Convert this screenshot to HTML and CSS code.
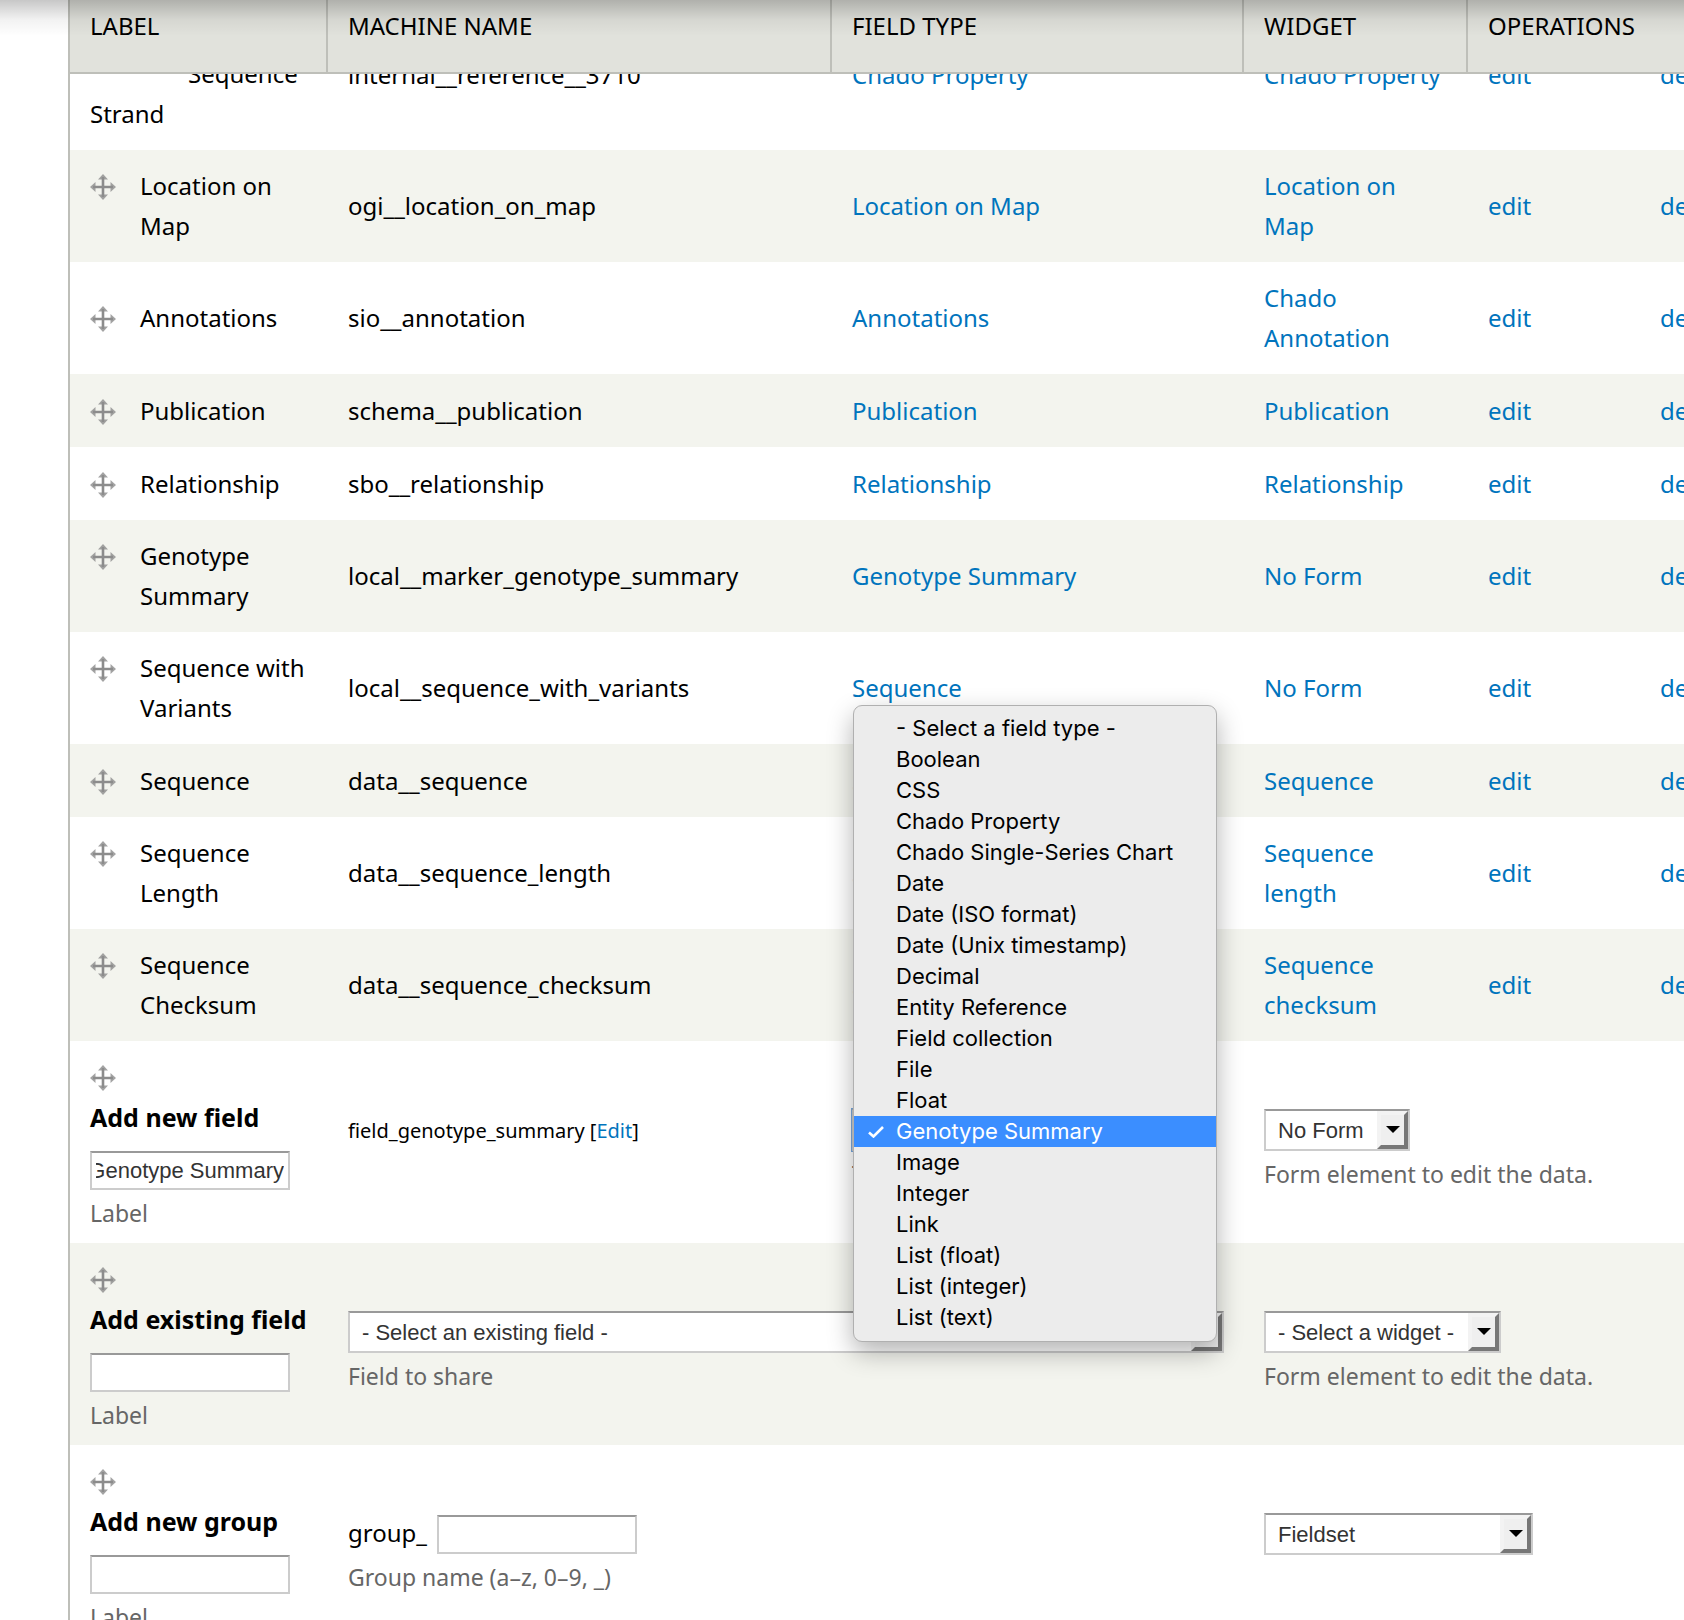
FILE: index.html
```html
<!DOCTYPE html>
<html lang="en">
<head>
<meta charset="utf-8">
<title>Manage fields</title>
<link rel="stylesheet" href="styles.css">
</head>
<body>
<svg class="sprite" aria-hidden="true">
  <symbol id="move" viewBox="0 0 26 26">
    <path d="M13 3v20M3 13h20" stroke="#8c8c8c" stroke-width="2.6" fill="none"/>
    <path d="M13 0l5 5.500H8zM13 26l5-5.500H8zM0 13l5.500-5v10zM26 13l-5.500-5v10z" fill="#8c8c8c" opacity=".8"/>
  </symbol>
</svg>
<div class="page">
  <table class="fields sticky-header">
    <colgroup><col class="c-label"><col class="c-name"><col class="c-type"><col class="c-widget"><col class="c-edit"><col class="c-delete"></colgroup>
    <thead>
      <tr><th scope="col">LABEL</th><th scope="col">MACHINE NAME</th><th scope="col">FIELD TYPE</th><th scope="col">WIDGET</th><th scope="col" colspan="2">OPERATIONS</th></tr>
    </thead>
  </table>
  <table class="fields">
    <colgroup><col class="c-label"><col class="c-name"><col class="c-type"><col class="c-widget"><col class="c-edit"><col class="c-delete"></colgroup>
    <tbody>
      <tr class="scrolled">
        <td class="nested">Sequence Strand</td>
        <td>internal__reference__3710</td>
        <td><a href="#">Chado Property</a></td>
        <td><a href="#">Chado Property</a></td>
        <td><a href="#">edit</a></td>
        <td><a href="#">delete</a></td>
      </tr>
      <tr class="odd">
        <td><div class="label"><svg class="handle"><use href="#move"/></svg><span>Location on Map</span></div></td>
        <td>ogi__location_on_map</td>
        <td><a href="#">Location on Map</a></td>
        <td><a href="#">Location on Map</a></td>
        <td><a href="#">edit</a></td>
        <td><a href="#">delete</a></td>
      </tr>
      <tr>
        <td><div class="label"><svg class="handle"><use href="#move"/></svg><span>Annotations</span></div></td>
        <td>sio__annotation</td>
        <td><a href="#">Annotations</a></td>
        <td><a href="#">Chado Annotation</a></td>
        <td><a href="#">edit</a></td>
        <td><a href="#">delete</a></td>
      </tr>
      <tr class="odd">
        <td><div class="label"><svg class="handle"><use href="#move"/></svg><span>Publication</span></div></td>
        <td>schema__publication</td>
        <td><a href="#">Publication</a></td>
        <td><a href="#">Publication</a></td>
        <td><a href="#">edit</a></td>
        <td><a href="#">delete</a></td>
      </tr>
      <tr>
        <td><div class="label"><svg class="handle"><use href="#move"/></svg><span>Relationship</span></div></td>
        <td>sbo__relationship</td>
        <td><a href="#">Relationship</a></td>
        <td><a href="#">Relationship</a></td>
        <td><a href="#">edit</a></td>
        <td><a href="#">delete</a></td>
      </tr>
      <tr class="odd">
        <td><div class="label"><svg class="handle"><use href="#move"/></svg><span>Genotype Summary</span></div></td>
        <td>local__marker_genotype_summary</td>
        <td><a href="#">Genotype Summary</a></td>
        <td><a href="#">No Form</a></td>
        <td><a href="#">edit</a></td>
        <td><a href="#">delete</a></td>
      </tr>
      <tr>
        <td><div class="label"><svg class="handle"><use href="#move"/></svg><span>Sequence with Variants</span></div></td>
        <td>local__sequence_with_variants</td>
        <td><a href="#">Sequence</a></td>
        <td><a href="#">No Form</a></td>
        <td><a href="#">edit</a></td>
        <td><a href="#">delete</a></td>
      </tr>
      <tr class="odd">
        <td><div class="label"><svg class="handle"><use href="#move"/></svg><span>Sequence</span></div></td>
        <td>data__sequence</td>
        <td><a href="#">Sequence</a></td>
        <td><a href="#">Sequence</a></td>
        <td><a href="#">edit</a></td>
        <td><a href="#">delete</a></td>
      </tr>
      <tr>
        <td><div class="label"><svg class="handle"><use href="#move"/></svg><span>Sequence Length</span></div></td>
        <td>data__sequence_length</td>
        <td><a href="#">Sequence length</a></td>
        <td><a href="#">Sequence length</a></td>
        <td><a href="#">edit</a></td>
        <td><a href="#">delete</a></td>
      </tr>
      <tr class="odd">
        <td><div class="label"><svg class="handle"><use href="#move"/></svg><span>Sequence Checksum</span></div></td>
        <td>data__sequence_checksum</td>
        <td><a href="#">Sequence checksum</a></td>
        <td><a href="#">Sequence checksum</a></td>
        <td><a href="#">edit</a></td>
        <td><a href="#">delete</a></td>
      </tr>
      <tr class="add">
        <td>
          <svg class="handle"><use href="#move"/></svg>
          <strong>Add new field</strong>
          <input class="text overflowing" type="text" id="new-label" value="Genotype Summary">
          <label class="description" for="new-label">Label</label>
        </td>
        <td class="form"><div class="machine-name">field_genotype_summary [<a href="#">Edit</a>]</div></td>
        <td class="form">
          <div class="type-picker">
            <span class="select focused"><select id="new-type"><option>Genotype Summary</option></select></span>
            <ul class="menu" role="listbox" aria-label="Field type">
              <li role="option">- Select a field type -</li>
              <li role="option">Boolean</li>
              <li role="option">CSS</li>
              <li role="option">Chado Property</li>
              <li role="option">Chado Single-Series Chart</li>
              <li role="option">Date</li>
              <li role="option">Date (ISO format)</li>
              <li role="option">Date (Unix timestamp)</li>
              <li role="option">Decimal</li>
              <li role="option">Entity Reference</li>
              <li role="option">Field collection</li>
              <li role="option">File</li>
              <li role="option">Float</li>
              <li role="option" aria-selected="true" class="selected"><svg class="check" viewBox="0 0 16 12"><path d="M1 6.500l4.500 4L15 1" fill="none" stroke="#fff" stroke-width="2.6"/></svg>Genotype Summary</li>
              <li role="option">Image</li>
              <li role="option">Integer</li>
              <li role="option">Link</li>
              <li role="option">List (float)</li>
              <li role="option">List (integer)</li>
              <li role="option">List (text)</li>
            </ul>
          </div>
          <label class="description" for="new-type">Type of data to store.</label>
        </td>
        <td class="form" colspan="3">
          <span class="select"><select id="new-widget"><option>No Form</option></select></span>
          <label class="description" for="new-widget">Form element to edit the data.</label>
        </td>
      </tr>
      <tr class="add odd">
        <td>
          <svg class="handle"><use href="#move"/></svg>
          <strong>Add existing field</strong>
          <input class="text" type="text" id="existing-label">
          <label class="description" for="existing-label">Label</label>
        </td>
        <td class="form" colspan="2">
          <span class="select full"><select id="existing-field"><option>- Select an existing field -</option></select></span>
          <label class="description" for="existing-field">Field to share</label>
        </td>
        <td class="form" colspan="3">
          <span class="select"><select id="existing-widget"><option>- Select a widget -</option></select></span>
          <label class="description" for="existing-widget">Form element to edit the data.</label>
        </td>
      </tr>
      <tr class="add">
        <td>
          <svg class="handle"><use href="#move"/></svg>
          <strong>Add new group</strong>
          <input class="text" type="text" id="group-label">
          <label class="description" for="group-label">Label</label>
        </td>
        <td class="form">
          <div class="prefixed"><span>group_</span><input class="text" type="text" id="group-name"></div>
          <label class="description" for="group-name">Group name (a–z, 0–9, _)</label>
        </td>
        <td></td>
        <td class="form" colspan="3"><span class="select wide"><select aria-label="Group widget"><option>Fieldset</option></select></span></td>
      </tr>
    </tbody>
  </table>
  <div class="toolbar-shadow"></div>
</div>
</body>
</html>
```
FILE: styles.css
```css
*, ::before, ::after { box-sizing: border-box; }

body {
  margin: 0;
  background: #fff;
  color: #000;
  font: 24px/40px "Noto Sans", sans-serif;
}

a { color: #0074bd; text-decoration: none; }

.sprite { display: none; }

.page {
  position: relative;
  height: 100vh;
  overflow: hidden;
  padding-left: 68px;
}

.toolbar-shadow {
  position: absolute;
  z-index: 3;
  inset: 0 0 auto;
  height: 36px;
  background: linear-gradient(rgba(0, 0, 0, .22), rgba(0, 0, 0, .14) 25%, rgba(0, 0, 0, .05) 55%, rgba(0, 0, 0, 0));
  pointer-events: none;
}

.fields {
  width: calc(100% + 60px);
  table-layout: fixed;
  border-collapse: separate;
  border-spacing: 0;
  border-left: 2px solid #bebfb9;
}

.c-label { width: 258px; }
.c-type { width: 412px; }
.c-widget { width: 224px; }
.c-edit { width: 172px; }
.c-delete { width: 104px; }

.sticky-header {
  position: absolute;
  top: 0;
  width: calc(100% - 8px);
  z-index: 1;
}

th {
  height: 74px;
  padding: 6px 20px 0;
  background: #e1e2dc;
  border-right: 2px solid #bebfb9;
  border-bottom: 2px solid #bebfb9;
  font-weight: 400;
  text-align: left;
  vertical-align: top;
}

td {
  height: 73px;
  padding: 16px 20px;
  vertical-align: middle;
}

.odd td { background: #f3f4ee; }

.scrolled td { height: 150px; }
.scrolled .nested { text-indent: 98px; vertical-align: bottom; }

.handle {
  display: block;
  flex: none;
  width: 26px;
  height: 42px;
  margin-bottom: -2px;
}

.label { display: flex; gap: 24px; }

.add td { height: 202px; vertical-align: top; }
.add .form { padding-top: 68px; }
.add strong { display: block; font-size: 25px; white-space: nowrap; }

.text {
  display: block;
  width: 200px;
  height: 39px;
  margin-top: 14px;
  padding: 0 4px;
  background: #fff;
  border: 2px solid #ccc;
  border-top-color: #999;
  color: #333;
  font: 22px "Liberation Sans", sans-serif;
}

/* keeps the end of a long value in view */
.overflowing { direction: rtl; }

.description {
  display: block;
  margin-top: 7px;
  color: #666;
  font-size: 23px;
  line-height: 32px;
}

.add td:first-child { padding-bottom: 14px; }

.machine-name { font-size: 20px; line-height: 44px; white-space: nowrap; }

.prefixed { display: flex; gap: 10px; }
.prefixed .text { margin-top: 2px; }

.select {
  position: relative;
  display: block;
  width: fit-content;
}

.select select {
  appearance: none;
  display: block;
  width: 100%;
  height: 42px;
  padding: 0 44px 0 12px;
  background: #fff;
  border: 2px solid #ccc;
  border-top-color: #999;
  border-radius: 0;
  color: #333;
  font: 22px "Liberation Sans", sans-serif;
}

.select::before {
  content: "";
  position: absolute;
  top: 2px;
  right: 2px;
  width: 31px;
  height: 38px;
  background: #efefef;
  border: 4px solid #777;
  border-top-color: #f3f3f3;
  border-left-color: #f3f3f3;
  pointer-events: none;
}

.select::after {
  content: "";
  position: absolute;
  top: 17px;
  right: 10px;
  border: 7px solid transparent;
  border-top-color: #000;
  border-bottom: 0;
  pointer-events: none;
}

.select.full { width: auto; }
.select.wide { width: 269px; }
.select.focused { width: 340px; box-shadow: 0 0 0 1px #7aa9dd; }

.type-picker { position: relative; }

.menu {
  position: absolute;
  z-index: 2;
  top: -404px;
  left: 1px;
  width: 364px;
  margin: 0;
  padding: 7px 0 8px;
  list-style: none;
  background: #ececec;
  border: 1px solid #b0b0b0;
  border-radius: 9px;
  box-shadow: 0 10px 26px rgba(0, 0, 0, .3);
  font: 22px/31px Inter, sans-serif;
}

.menu li { position: relative; padding-left: 42px; }

.menu .selected { background: #3b8eff; color: #fff; }

.check {
  position: absolute;
  top: 10px;
  left: 14px;
  width: 16px;
  height: 12px;
}
```
